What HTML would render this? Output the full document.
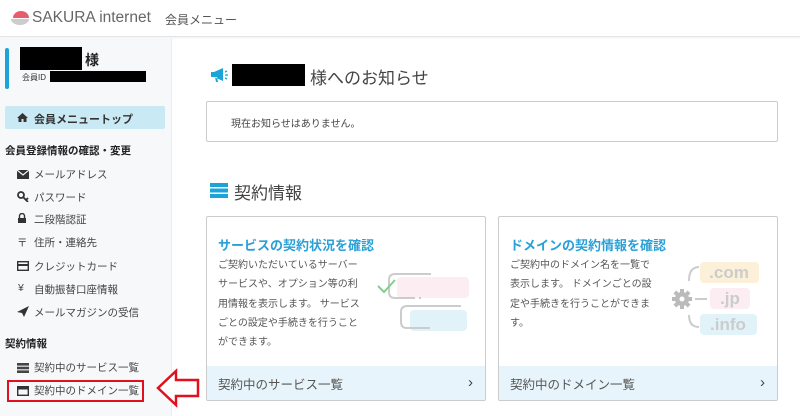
<!DOCTYPE html>
<html><head><meta charset="utf-8"><style>
*{margin:0;padding:0;box-sizing:border-box}
body{width:800px;height:416px;overflow:hidden;background:#fff;font-family:"Liberation Sans","Noto Sans CJK JP",sans-serif;color:#333;position:relative}
.abs{position:absolute}
.hdr{left:0;top:0;width:800px;height:37px;background:#fff;border-bottom:1px solid #e4e4e4;box-shadow:0 1px 2px rgba(0,0,0,.06)}
.side{left:0;top:38px;width:172px;height:378px;background:#f7f8fa;border-right:1px solid #ececec}
.it{left:17px;font-size:10.5px;color:#444;white-space:nowrap}
.ic{position:absolute;left:17px}
.card{width:280px;height:185px;border:1px solid #ccc;border-radius:2px;background:#fff;overflow:hidden}
.card h3{position:absolute;left:11px;top:18px;font-size:13px;color:#2aa0d6;font-weight:bold}
.card p{position:absolute;left:11px;top:39px;font-size:10px;line-height:19.3px;color:#555}
.card .ft{position:absolute;left:0;bottom:0;width:100%;height:34px;background:#e8f4fb;font-size:12.5px;color:#555;padding:8px 11px}
.card .ft b{position:absolute;right:12px;top:8px;font-weight:normal;font-size:15px;color:#444}
</style></head><body>
<div class="abs hdr"></div>
<svg class="abs" style="left:10px;top:9px" width="22" height="18"><path d="M3 9 A8 7 0 0 1 19 9 Z" fill="#e85d6a"/><path d="M1 10 L19 10 A9 6 0 0 1 1 10Z" fill="#ccc"/></svg>
<div class="abs" style="left:32px;top:9px;font-size:15.5px;color:#666">SAKURA internet</div>
<div class="abs" style="left:165px;top:11px;font-size:12px;color:#555">会員メニュー</div>

<div class="abs side"></div>
<div class="abs" style="left:5px;top:48px;width:4px;height:41px;background:#1ca4d8;border-radius:2px"></div>
<div class="abs" style="left:20px;top:47px;width:62px;height:23px;background:#000"></div>
<div class="abs" style="left:85px;top:50px;font-size:14px;font-weight:bold;color:#222">様</div>
<div class="abs" style="left:22px;top:72px;font-size:8px;color:#333">会員ID</div>
<div class="abs" style="left:50px;top:71px;width:96px;height:11px;background:#000"></div>
<div class="abs" style="left:5px;top:106px;width:160px;height:23px;background:#c9e9f5;border-radius:2px"></div>
<svg class="abs" style="left:17px;top:113px" width="11" height="9"><path d="M0 5 L5.5 0 L11 5 L9.5 5 L9.5 9 L6.5 9 L6.5 6 L4.5 6 L4.5 9 L1.5 9 L1.5 5Z" fill="#333"/></svg>
<div class="abs it" style="left:34px;top:111px;font-weight:bold;color:#333;font-size:11px">会員メニュートップ</div>
<div class="abs" style="left:5px;top:143px;font-size:10.5px;font-weight:bold;color:#222">会員登録情報の確認・変更</div>

<svg class="ic" style="top:170px" width="12" height="9"><rect width="12" height="9" fill="#333"/><path d="M0 0 L6 5 L12 0" stroke="#f7f8fa" stroke-width="1.2" fill="none"/></svg>
<div class="abs it" style="left:34px;top:167px">メールアドレス</div>
<svg class="ic" style="top:191px" width="12" height="11"><circle cx="4" cy="4" r="3" stroke="#333" stroke-width="1.8" fill="none"/><path d="M6 6 L11 11 M9 9 L11 7" stroke="#333" stroke-width="1.8"/></svg>
<div class="abs it" style="left:34px;top:190px">パスワード</div>
<svg class="ic" style="top:213px" width="10" height="10"><path d="M2.5 5 V3 A2.5 2.5 0 0 1 7.5 3 V5" stroke="#333" stroke-width="1.4" fill="none"/><rect x="1" y="5" width="8" height="5" fill="#333"/></svg>
<div class="abs it" style="left:34px;top:212px">二段階認証</div>
<div class="abs it" style="top:235px">〒</div>
<div class="abs it" style="left:34px;top:235px">住所・連絡先</div>
<svg class="ic" style="top:261px" width="12" height="10"><rect x=".7" y=".7" width="10.6" height="8.6" stroke="#333" stroke-width="1.4" fill="none"/><rect x="1" y="3" width="10" height="2" fill="#333"/></svg>
<div class="abs it" style="left:34px;top:259px">クレジットカード</div>
<div class="abs it" style="left:18px;top:282px">¥</div>
<div class="abs it" style="left:34px;top:282px">自動振替口座情報</div>
<svg class="ic" style="top:306px" width="12" height="11"><path d="M0 6 L12 0 L7 11 L5 7Z" fill="#333"/></svg>
<div class="abs it" style="left:34px;top:305px">メールマガジンの受信</div>
<div class="abs" style="left:5px;top:336px;font-size:10.5px;font-weight:bold;color:#222">契約情報</div>
<svg class="ic" style="top:363px" width="12" height="10"><rect width="12" height="2.6" fill="#444"/><rect y="3.7" width="12" height="2.6" fill="#444"/><rect y="7.4" width="12" height="2.6" fill="#444"/></svg>
<div class="abs it" style="left:34px;top:360px">契約中のサービス一覧</div>
<svg class="ic" style="top:386px" width="12" height="10"><rect x=".7" y=".7" width="10.6" height="8.6" stroke="#333" stroke-width="1.4" fill="none"/><rect x="1" y="1" width="10" height="2.5" fill="#333"/></svg>
<div class="abs it" style="left:34px;top:383px">契約中のドメイン一覧</div>
<div class="abs" style="left:7px;top:380px;width:137px;height:22px;border:2px solid #e0101c"></div>
<svg class="abs" style="left:155px;top:368px" width="46" height="40"><path d="M3 20 L21 3 L21 12 L43 12 L43 28 L21 28 L21 37 Z" fill="#fff" stroke="#e0101c" stroke-width="2.5"/></svg>

<svg class="abs" style="left:210px;top:67px" width="18" height="16"><path d="M1 5 L4 5 L13 1 L13 14 L4 10 L1 10 Z M5 10 L6 15 L8 15 L7 10Z" fill="#1ca4d8"/><path d="M15 5 L17 4 M15 8 L18 8 M15 11 L17 12" stroke="#1ca4d8" stroke-width="1.3"/></svg>
<div class="abs" style="left:232px;top:64px;width:73px;height:22px;background:#000"></div>
<div class="abs" style="left:310px;top:64px;font-size:17px;color:#444">様へのお知らせ</div>
<div class="abs" style="left:206px;top:101px;width:572px;height:41px;border:1px solid #ccc;border-radius:2px"></div>
<div class="abs" style="left:231px;top:115px;font-size:10px;color:#444">現在お知らせはありません。</div>
<svg class="abs" style="left:210px;top:183px" width="18" height="15"><rect x="0" y="0" width="18" height="4" fill="#1ca4d8"/><rect x="0" y="5.5" width="18" height="4" fill="#1ca4d8"/><rect x="0" y="11" width="18" height="4" fill="#1ca4d8"/></svg>
<div class="abs" style="left:234px;top:179px;font-size:17px;color:#444">契約情報</div>

<div class="abs card" style="left:206px;top:216px">
<h3>サービスの契約状況を確認</h3>
<p>ご契約いただいているサーバー<br>サービスや、オプション等の利<br>用情報を表示します。 サービス<br>ごとの設定や手続きを行うこと<br>ができます。</p>
<svg class="abs" style="left:168px;top:40px" width="105" height="80"><rect x="22" y="20" width="72" height="21" rx="4" fill="#fcedf2"/><path d="M56 17 L20 17 Q14 17 14 23 L14 35 Q14 41 20 41 L40 41 M44 41 L46 41" stroke="#ccc" stroke-width="2" fill="none"/><path d="M3 29 L9 35 L20 23" stroke="#7fd08a" stroke-width="2" fill="none"/><rect x="35" y="53" width="57" height="21" rx="4" fill="#e1f3f9"/><path d="M86 49 L32 49 Q26 49 26 55 L26 65 Q26 71 32 71 L55 71" stroke="#ccc" stroke-width="2" fill="none"/></svg>
<div class="ft">契約中のサービス一覧<b>›</b></div>
</div>
<div class="abs card" style="left:498px;top:216px">
<h3>ドメインの契約情報を確認</h3>
<p>ご契約中のドメイン名を一覧で<br>表示します。 ドメインごとの設<br>定や手続きを行うことができま<br>す。</p>
<svg class="abs" style="left:170px;top:40px" width="105" height="85"><rect x="31" y="5" width="59" height="21" rx="4" fill="#fcf1d8"/><text x="60" y="21" font-size="17" font-weight="bold" fill="#ccc" text-anchor="middle" font-family="Liberation Sans">.com</text><rect x="41" y="31" width="40" height="21" rx="4" fill="#fcedf2"/><text x="61" y="47" font-size="17" font-weight="bold" fill="#ccc" text-anchor="middle" font-family="Liberation Sans">.jp</text><rect x="31" y="57" width="57" height="21" rx="4" fill="#e1f3f9"/><text x="59" y="73" font-size="17" font-weight="bold" fill="#ccc" text-anchor="middle" font-family="Liberation Sans">.info</text>
<g fill="#bbb"><circle cx="13" cy="42" r="7"/><rect x="11" y="32" width="4" height="20"/><rect x="3" y="40" width="20" height="4"/><rect x="11" y="32" width="4" height="20" transform="rotate(45 13 42)"/><rect x="11" y="32" width="4" height="20" transform="rotate(-45 13 42)"/></g><circle cx="13" cy="42" r="2.5" fill="#fff"/>
<path d="M30 10 Q20 10 20 24 M26 42 L38 42 M20 58 Q20 70 30 70" stroke="#ccc" stroke-width="2" fill="none"/></svg>
<div class="ft">契約中のドメイン一覧<b>›</b></div>
</div>
</body></html>
